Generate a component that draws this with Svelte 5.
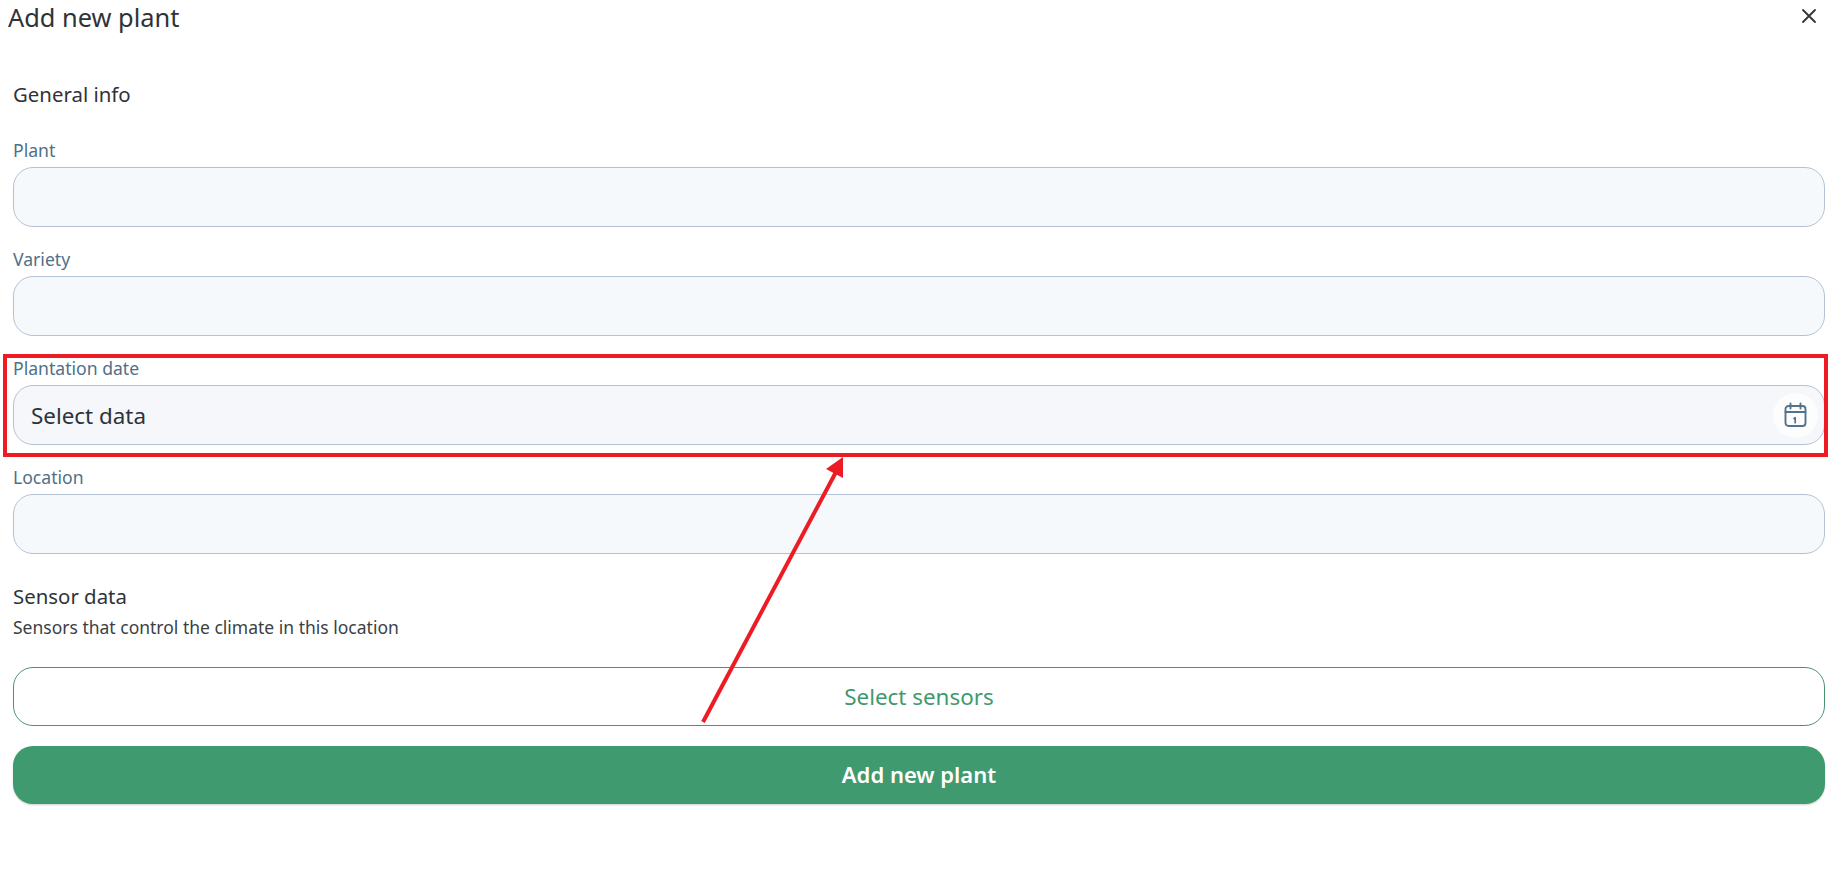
<script>
  const fields = [
    { label: 'Plant' },
    { label: 'Variety' },
    { label: 'Plantation date', date: true },
    { label: 'Location' }
  ];
</script>

<div class="page">
  <header class="head">
    <h1>Add new plant</h1>
    <button class="close" aria-label="Close">
      <svg width="16" height="16" viewBox="0 0 16 16" fill="none" stroke="#2f3338" stroke-width="1.8" stroke-linecap="round"><path d="M2 2l12 12M14 2L2 14" /></svg>
    </button>
  </header>

  <main class="form">
    <h2 class="general">General info</h2>
    <div class="fields">
      {#each fields as f}
        <div class="field">
          <span class="label">{f.label}</span>
          <div class="input" class:date={f.date}>
            {#if f.date}
              <span class="value">Select data</span>
              <span class="cal">
                <svg width="24" height="26" viewBox="0.5 0 24 26" fill="none" stroke="#527389" stroke-width="1.9" stroke-linecap="round" stroke-linejoin="round">
                  <rect x="2" y="4" width="20" height="20" rx="3" />
                  <path d="M2 10h20M7 1.5v5M17 1.5v5" />
                  <path d="M10.5 16.5l1.2-.8v5" stroke-width="1.7" />
                </svg>
              </span>
            {/if}
          </div>
        </div>
      {/each}
    </div>

    <h2 class="sensor">Sensor data</h2>
    <p class="sub">Sensors that control the climate in this location</p>
    <button class="outline">Select sensors</button>
    <button class="solid">Add new plant</button>
  </main>

  <div class="box"></div>
  <svg class="arrow" width="1832" height="881" viewBox="0 0 1832 881">
    <path d="M703 722L836 472" stroke="#ed1c24" stroke-width="4" fill="none" />
    <path d="M843 457L826 469L843 478Z" fill="#ed1c24" />
  </svg>
</div>

<style>
  :global(body) { margin: 0; background: #fff; }
  .page {
    position: relative;
    height: 881px;
    overflow: hidden;
    font-family: "Noto Sans", "Open Sans", sans-serif;
    color: #2f3338;
  }
  .head {
    display: flex;
    justify-content: space-between;
    align-items: flex-start;
    padding: 0 15px 0 8px;
    height: 37px;
  }
  h1 { margin: 0; font-size: 25.4px; font-weight: 400; line-height: 34px; }
  .close {
    margin-top: 8px;
    padding: 0;
    border: 0;
    background: none;
    width: 16px;
    height: 16px;
  }
  .close svg { display: block; }
  .form { display: flex; flex-direction: column; padding: 0 7px 0 13px; }
  h2 { margin: 0; font-size: 20.4px; font-weight: 400; line-height: 26px; }
  .general { margin-top: 44px; }
  .fields { display: flex; flex-direction: column; margin-top: 31px; gap: 20px; }
  .field { display: flex; flex-direction: column; }
  .label { font-size: 17.6px; line-height: 24px; height: 29px; color: #4f7087; }
  .input {
    box-sizing: border-box;
    height: 60px;
    border: 1px solid #b4c3d3;
    border-radius: 20px;
    background: #f5f9fc;
  }
  .date {
    display: flex;
    align-items: center;
    justify-content: space-between;
    background: #f5f7fa;
    padding: 0 6px 0 17px;
  }
  .value { font-size: 22.4px; color: #2f3338; }
  .cal {
    display: flex;
    align-items: center;
    justify-content: center;
    width: 45px;
    height: 45px;
    border-radius: 50%;
    background: #fdfdfe;
  }
  .sensor { margin-top: 30px; line-height: 24px; }
  .sub { margin: 7px 0 0; font-size: 17.5px; line-height: 24px; color: #3a3f44; }
  button { font-family: inherit; }
  .outline {
    box-sizing: border-box;
    margin-top: 28px;
    height: 59px;
    border: 1px solid #4b9472;
    border-radius: 20px;
    background: #fff;
    color: #3f9a6e;
    font-size: 22.4px;
  }
  .solid {
    margin-top: 20px;
    height: 58px;
    padding-bottom: 3px;
    border: 0;
    border-radius: 20px;
    background: #409a6f;
    color: #fff;
    font-size: 22px;
    font-weight: 600;
    box-shadow: 0 1px 2px rgba(0, 0, 0, 0.2);
  }
  .box {
    position: absolute;
    left: 3px;
    top: 354px;
    width: 1817px;
    height: 95px;
    border: 4px solid #ed1c24;
    pointer-events: none;
  }
  .arrow { position: absolute; left: 0; top: 0; pointer-events: none; }
</style>
